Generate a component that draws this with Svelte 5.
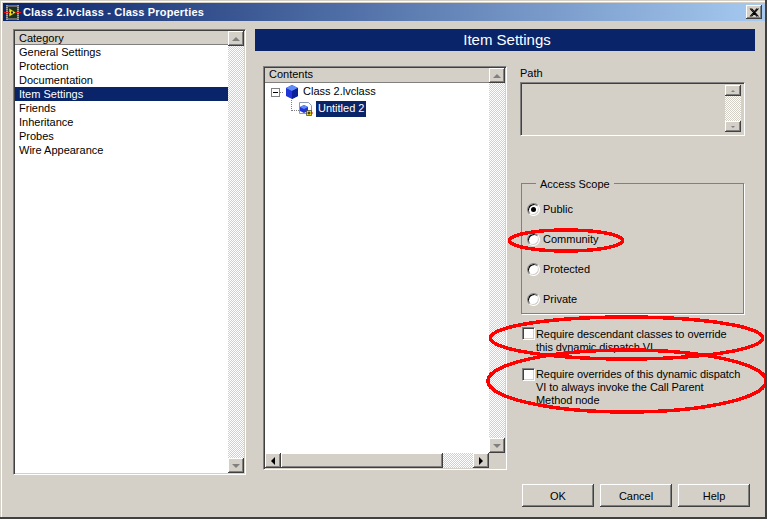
<script lang="ts">
	const categories = [
		'General Settings',
		'Protection',
		'Documentation',
		'Item Settings',
		'Friends',
		'Inheritance',
		'Probes',
		'Wire Appearance'
	];
	const scopes = ['Public', 'Community', 'Protected', 'Private'];
	const buttons = ['OK', 'Cancel', 'Help'];
	let selected = 'Item Settings';
	let scope = 'Public';
</script>

<div class="window">
	<header class="titlebar">
		<svg class="app-icon" width="17" height="16" viewBox="0 0 17 16">
			<rect x="2" y="1" width="13" height="15" fill="#6b6b6b" />
			<rect x="4" y="3" width="9" height="11" fill="#17351f" />
			<path d="M3 1v15M14 1v15" stroke="#ddd" stroke-width="1" stroke-dasharray="1 1" />
			<path d="M5 4l7 4.5-7 4.5z" fill="#f6e21a" stroke="#222" stroke-width=".6" />
			<path d="M0 8.5h6M11 8.5h6" stroke="#e01010" stroke-width="1" />
			<path d="M7 7.5h2v2H7z" fill="#222" />
		</svg>
		<span class="titlebar__text">Class 2.lvclass - Class Properties</span>
		<button class="close" type="button" aria-label="Close">
			<svg width="10" height="9" viewBox="0 0 10 9"><path d="M1 0.5l7 8M2.5 0.5l7 8M8 0.5l-7 8M9.5 0.5l-7 8" stroke="#000" stroke-width="1.1" /></svg>
		</button>
	</header>

	<div class="body">
		<section class="frame category">
			<div class="list">
				<div class="list__head">Category</div>
				{#each categories as item}
					<div class="list__row" class:is-active={item === selected}>{item}</div>
				{/each}
			</div>
			<div class="vbar">
				<span class="sbtn"><i class="tri tri--up"></i></span>
				<span class="track"></span>
				<span class="sbtn"><i class="tri tri--down"></i></span>
			</div>
		</section>

		<section class="panel">
			<h1 class="banner">Item Settings</h1>

			<div class="panel__main">
				<div class="frame tree">
					<div class="tree__top">
						<div class="list tree__list">
							<div class="list__head list__head--tree">Contents</div>
							<div class="node">
								<span class="expander"></span>
								<span class="dots dots--h"></span>
								<svg width="14" height="14" viewBox="0 0 14 14">
									<path d="M7 0l6 3v8l-6 3-6-3V3z" fill="#1f35d8" />
									<path d="M7 0l6 3-6 3-6-3z" fill="#5f8cf5" />
									<path d="M7 6l6-3v8l-6 3z" fill="#0c1f96" />
								</svg>
								<span class="node__label">Class 2.lvclass</span>
							</div>
							<div class="node node--child">
								<span class="dots dots--elbow"></span>
								<svg width="14" height="14" viewBox="0 0 14 14">
									<path d="M.5.5h9l3 3v8h-12z" fill="#fff" stroke="#8a97b8" />
									<path d="M5 3l4 2v4l-4 2-4-2V5z" fill="#1f35d8" />
									<path d="M5 3l4 2-4 2-4-2z" fill="#5f8cf5" />
									<path d="M7.5 8.5h5v5h-5z" fill="#f6e21a" stroke="#333" stroke-width=".7" />
									<path d="M8.5 11h3M10 9.5v3" stroke="#111" />
									<path d="M12.5 11H14" stroke="#e01010" />
								</svg>
								<span class="node__label is-active">Untitled 2</span>
							</div>
						</div>
						<div class="vbar">
							<span class="sbtn"><i class="tri tri--up"></i></span>
							<span class="track"></span>
							<span class="sbtn"><i class="tri tri--down"></i></span>
						</div>
					</div>
					<div class="hbar">
						<span class="sbtn"><i class="tri tri--left"></i></span>
						<span class="thumb"></span>
						<span class="track"></span>
						<span class="sbtn"><i class="tri tri--right"></i></span>
					</div>
				</div>

				<div class="side">
					<div class="side__label">Path</div>
					<div class="frame path">
						<div class="vbar">
							<span class="sbtn sbtn--small"><i class="tri tri--up tri--small"></i></span>
							<span class="track"></span>
							<span class="sbtn sbtn--small"><i class="tri tri--down tri--small"></i></span>
						</div>
					</div>

					<div class="group">
						<span class="group__title">Access Scope</span>
						{#each scopes as item}
							<div class="radio-row">
								<span class="radio" class:is-on={item === scope}></span>
								<span>{item}</span>
							</div>
						{/each}
					</div>

					<div class="check check--first">
						<span class="check__box"></span>
						<span class="check__text">Require descendant classes to override<br />this dynamic dispatch VI</span>
					</div>
					<div class="check">
						<span class="check__box"></span>
						<span class="check__text">Require overrides of this dynamic dispatch<br />VI to always invoke the Call Parent<br />Method node</span>
					</div>
				</div>
			</div>

			<footer class="actions">
				{#each buttons as label}
					<button class="btn" type="button">{label}</button>
				{/each}
			</footer>
		</section>
	</div>

	<!-- red marks drawn over the screenshot -->
	<svg class="marks" width="767" height="519" viewBox="0 0 767 519">
		<ellipse cx="566" cy="240.5" rx="56.5" ry="10.5" />
		<ellipse cx="626.5" cy="338" rx="136" ry="21" />
		<ellipse cx="627" cy="381" rx="139" ry="31" />
	</svg>
</div>

<style>
	:global(body) {
		margin: 0;
		background: #d4d0c8;
	}

	.window {
		position: relative;
		width: 767px;
		height: 519px;
		box-sizing: border-box;
		overflow: hidden;
		padding: 1px 0 0 1px;
		display: flex;
		flex-direction: column;
		background: #d4d0c8;
		border-right: 2px solid #404040;
		border-bottom: 2px solid #404040;
		font-family: 'Liberation Sans', sans-serif;
		font-size: 11px;
		line-height: 14px;
		color: #000;
		box-shadow: inset 1px 1px #d4d0c8, inset 2px 2px #fff;
	}

	.titlebar {
		flex: none;
		height: 18px;
		margin: 2px 0 0 2px;
		padding: 0 3px 0 1px;
		display: flex;
		align-items: center;
		gap: 2px;
		background: linear-gradient(90deg, #0a246a, #a6caf0);
		color: #fff;
	}

	.titlebar__text {
		flex: 1;
		font-weight: 700;
		letter-spacing: 0.18px;
	}

	.close {
		width: 16px;
		height: 14px;
		padding: 0;
		border: 0;
		display: flex;
		align-items: center;
		justify-content: center;
		background: #d4d0c8;
		box-shadow: inset -1px -1px #404040, inset 1px 1px #fff, inset -2px -2px #808080;
	}

	.body {
		flex: 1;
		display: flex;
		padding: 8px 0 0 12px;
		gap: 9px;
	}

	.frame {
		box-sizing: border-box;
		padding: 1px;
		border: 1px solid;
		border-color: #808080 #fff #fff #808080;
		box-shadow: inset 1px 1px #404040, inset -1px -1px #d4d0c8;
	}

	.category {
		width: 233px;
		height: 446px;
		display: flex;
	}

	.list {
		flex: 1;
		background: #fff;
	}

	.list__head {
		height: 14px;
		padding-left: 4px;
		background: #d4d0c8;
		box-shadow: inset 0 -1px #808080;
		line-height: 14px;
	}

	.list__head--tree {
		height: 15px;
		line-height: 13px;
	}

	.list__row {
		height: 14px;
		padding-left: 4px;
	}

	.list__row.is-active {
		background: #0a246a;
		color: #fff;
	}

	.vbar {
		width: 16px;
		display: flex;
		flex-direction: column;
		flex: none;
	}

	.sbtn {
		flex: none;
		width: 16px;
		height: 15px;
		display: flex;
		align-items: center;
		justify-content: center;
		background: #d4d0c8;
		box-shadow: inset -1px -1px #404040, inset 1px 1px #fff, inset -2px -2px #808080;
	}

	.sbtn--small {
		height: 11px;
	}

	.track {
		flex: 1;
		background: repeating-conic-gradient(#d4d0c8 0 25%, #fff 0 50%) 0 0 / 2px 2px;
	}

	.tri {
		display: block;
		width: 0;
		height: 0;
		border: 4px solid transparent;
	}

	.tri--up {
		border-top: 0;
		border-bottom-color: #808080;
	}

	.tri--down {
		border-bottom: 0;
		border-top-color: #808080;
	}

	.tri--left {
		border-left: 0;
		border-right-color: #000;
	}

	.tri--right {
		border-right: 0;
		border-left-color: #000;
	}

	.tri--small {
		border-width: 2px;
	}

	.tri--small.tri--up {
		border-top: 0;
	}

	.tri--small.tri--down {
		border-bottom: 0;
	}

	.panel {
		width: 500px;
		display: flex;
		flex-direction: column;
	}

	.banner {
		box-sizing: border-box;
		height: 22px;
		margin: 0;
		padding-left: 4px;
		background: #0a246a;
		color: #fff;
		font-size: 15px;
		font-weight: 400;
		line-height: 22px;
		text-align: center;
	}

	.panel__main {
		display: flex;
		margin: 15px 0 0 8px;
		gap: 13px;
	}

	.tree {
		width: 244px;
		height: 404px;
		display: flex;
		flex-direction: column;
	}

	.tree__top {
		flex: 1;
		display: flex;
		min-height: 0;
	}

	.node {
		height: 17px;
		display: flex;
		align-items: center;
		padding-left: 6px;
	}

	.node--child {
		padding-left: 26px;
	}

	.expander {
		width: 7px;
		height: 7px;
		margin-top: 1px;
		border: 1px solid #808080;
		background: linear-gradient(#000, #000) center / 5px 1px no-repeat #fff;
	}

	.dots--h {
		width: 3px;
		margin: 1px 2px 0 0;
		border-top: 1px dotted #808080;
	}

	.dots--elbow {
		align-self: flex-start;
		width: 7px;
		height: 10px;
		border-left: 1px dotted #808080;
		border-bottom: 1px dotted #808080;
	}

	.node__label {
		margin-left: 2px;
		padding: 0 2px 2px;
		line-height: 14px;
	}

	.node__label.is-active {
		margin-left: 3px;
		background: #0a246a;
		color: #fff;
	}

	.hbar {
		flex: none;
		height: 15px;
		display: flex;
		margin-right: 16px;
	}

	.thumb {
		width: 162px;
		background: #d4d0c8;
		box-shadow: inset -1px -1px #404040, inset 1px 1px #fff, inset -2px -2px #808080;
	}

	.side {
		width: 235px;
	}

	.side__label {
		height: 16px;
	}

	.path {
		width: 225px;
		height: 54px;
		display: flex;
		justify-content: flex-end;
		padding: 2px 3px 3px 1px;
	}

	.group {
		position: relative;
		box-sizing: border-box;
		width: 223px;
		height: 131px;
		margin: 47px 0 0 1px;
		padding: 10px 0 0 5px;
		border: 1px solid #808080;
		box-shadow: 1px 1px #fff;
	}

	.group__title {
		position: absolute;
		top: -7px;
		left: 14px;
		padding: 0 4px;
		background: #d4d0c8;
	}

	.radio-row {
		height: 30px;
		display: flex;
		align-items: center;
		gap: 3px;
	}

	.radio {
		position: relative;
		width: 13px;
		height: 13px;
		box-sizing: border-box;
		border: 1px solid;
		border-color: #808080 #fff #fff #808080;
		border-radius: 50%;
		background: #fff;
		box-shadow: inset 1px 1px #000, inset -1px -1px #d4d0c8;
	}

	.radio.is-on::after {
		content: '';
		position: absolute;
		top: 3px;
		left: 3px;
		width: 5px;
		height: 5px;
		border-radius: 50%;
		background: #000;
	}

	.check {
		display: flex;
		gap: 1px;
		line-height: 13px;
		letter-spacing: -0.07px;
		white-space: nowrap;
		margin: 15px 0 0 2px;
	}

	.check--first {
		height: 26px;
		margin-top: 13px;
	}

	.check--first .check__text {
		padding-top: 1px;
	}

	.check__box {
		flex: none;
		width: 13px;
		height: 13px;
		box-sizing: border-box;
		border: 1px solid;
		border-color: #808080 #fff #fff #808080;
		background: #fff;
		box-shadow: inset 1px 1px #404040, inset -1px -1px #d4d0c8;
	}

	.actions {
		display: flex;
		justify-content: flex-end;
		gap: 6px;
		margin-top: 14px;
		padding-right: 5px;
	}

	.btn {
		width: 72px;
		height: 23px;
		padding: 0;
		border: 0;
		background: #d4d0c8;
		box-shadow: inset -1px -1px #404040, inset 1px 1px #fff, inset -2px -2px #808080;
		font: inherit;
		color: #000;
	}

	.marks {
		position: absolute;
		top: 0;
		left: 0;
		pointer-events: none;
	}

	.marks ellipse {
		fill: none;
		stroke: #f00;
		stroke-width: 3.5;
		shape-rendering: crispEdges;
	}
</style>
